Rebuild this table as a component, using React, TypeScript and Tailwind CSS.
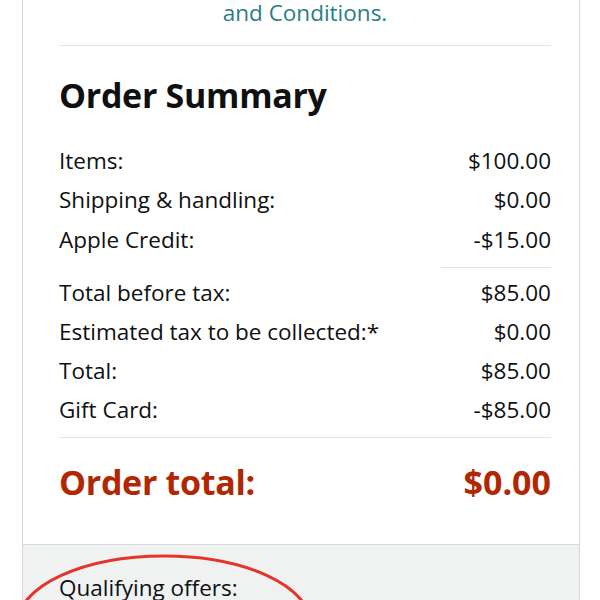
import React from "react";

const Row: React.FC<{ label: string; value: string; h?: string }> = ({ label, value, h = "h-[39.5px]" }) => (
    <div className={`flex justify-between items-center ${h}`}>
        <span>{label}</span>
        <span>{value}</span>
    </div>
);

const App: React.FC = () => {
    return (
        <div
            className="w-[600px] h-[600px] overflow-hidden bg-white relative text-[#0f1111]"
            style={{ fontFamily: '"Open Sans", "Liberation Sans", sans-serif' }}
        >
            <div className="ml-[22px] w-[558px] border-x border-b border-[#d5d9d9] mt-[-20px]">
                <div className="pl-[36px] pr-[28px] pt-[20px]">
                    <div className="text-center text-[22.5px] text-[#2a7d87] leading-[26px] pb-[19px] border-b border-[#e3e6e6]">
                        and Conditions.
                    </div>
                    <h1 className="text-[34px] font-bold leading-[44px] mt-[27px] mb-[24px] tracking-[-0.3px]">
                        Order Summary
                    </h1>
                    <div className="text-[22.5px]">
                        <Row label="Items:" value="$100.00" />
                        <Row label="Shipping & handling:" value="$0.00" />
                        <Row label="Apple Credit:" value="-$15.00" />
                        <div className="flex justify-end mt-[7px] mb-[6px]">
                            <div className="w-[110px] border-t border-[#e3e6e6]" />
                        </div>
                        <Row label="Total before tax:" value="$85.00" h="h-[39px]" />
                        <Row label="Estimated tax to be collected:*" value="$0.00" h="h-[39px]" />
                        <Row label="Total:" value="$85.00" h="h-[39px]" />
                        <Row label="Gift Card:" value="-$85.00" h="h-[39px]" />
                        <div className="border-t border-[#e3e6e6] mt-[7px]" />
                    </div>
                    <div className="flex justify-between items-center text-[34px] font-bold text-[#b12704] mt-[23px] h-[44px] mb-[39px] tracking-[-0.3px]">
                        <span>Order total:</span>
                        <span className="tracking-normal">$0.00</span>
                    </div>
                </div>
                <div className="bg-[#f0f2f2] border-t border-[#d5d9d9] px-[36px] pt-[31px] h-[80px]">
                    <div className="text-[22.5px] leading-[24px]">Qualifying offers:</div>
                </div>
            </div>
            <svg className="absolute left-0 top-[550px]" width="330" height="50" viewBox="0 0 330 50">
                <ellipse cx="164" cy="73" rx="146" ry="67" fill="none" stroke="#e4352a" strokeWidth="3" />
            </svg>
        </div>
    );
};

export default App;
